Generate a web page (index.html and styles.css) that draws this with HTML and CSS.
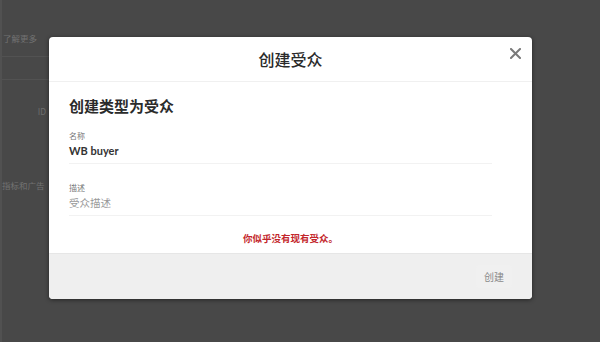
FILE: index.html
```html
<!DOCTYPE html>
<html lang="zh-CN">
<head>
<meta charset="utf-8">
<link rel="stylesheet" href="styles.css">
</head>
<body>
<div class="page">
  <div class="bg-link">了解更多</div>
  <div class="bg-row"></div>
  <div class="bg-row bg-row2"></div>
  <div class="bg-id">ID</div>
  <div class="bg-metric">指标和广告</div>
</div>
<div class="modal">
  <div class="modal-head">
    <span class="modal-title">创建受众</span>
    <span class="close">
      <svg width="11" height="11" viewBox="0 0 11 11"><path d="M1 1L10 10M10 1L1 10" stroke="#7a7a7a" stroke-width="2" stroke-linecap="square"/></svg>
    </span>
  </div>
  <div class="modal-body">
    <h2 class="heading">创建类型为受众</h2>
    <div class="field">
      <div class="label">名称</div>
      <div class="value">WB buyer</div>
    </div>
    <div class="field">
      <div class="label">描述</div>
      <div class="placeholder">受众描述</div>
    </div>
    <div class="warn">你似乎没有现有受众。</div>
  </div>
  <div class="modal-foot">
    <span class="btn">创建</span>
  </div>
</div>
</body>
</html>
```
FILE: styles.css
```css
html, body {
  margin: 0;
  padding: 0;
}
body {
  width: 600px;
  height: 342px;
  background: #484848;
  font-family: "Noto Sans CJK SC", "Noto Sans", sans-serif;
  overflow: hidden;
  position: relative;
}
.page {
  display: flex;
  flex-direction: column;
  width: 49px;
  border-left: 2px solid #515151;
  height: 342px;
  box-sizing: border-box;
}
.bg-link {
  margin-top: 32px;
  font-size: 8.5px;
  line-height: 12px;
  color: #727272;
  white-space: nowrap;
  padding-left: 1px;
}
.bg-row {
  margin-top: 12px;
  height: 1px;
  background: #525252;
}
.bg-row2 {
  margin-top: 22px;
}
.bg-id {
  margin-top: 26px;
  font-size: 8.5px;
  line-height: 10px;
  color: #6e6e6e;
  text-align: right;
  padding-right: 3px;
}
.bg-metric {
  margin-top: 64px;
  font-size: 8.5px;
  line-height: 10px;
  color: #727272;
  white-space: nowrap;
}
.modal {
  position: absolute;
  left: 49px;
  top: 37px;
  width: 483px;
  height: 262px;
  background: #fff;
  border-radius: 4px;
  box-shadow: 0 1px 4px rgba(0,0,0,0.5);
  display: flex;
  flex-direction: column;
  overflow: hidden;
}
.modal-head {
  height: 44px;
  border-bottom: 1px solid #f0f0f0;
  display: flex;
  align-items: center;
  justify-content: center;
  position: relative;
}
.modal-title {
  font-size: 16px;
  font-weight: 500;
  color: #2a2a2a;
  margin-top: -1px;
}
.close {
  position: absolute;
  right: 11px;
  top: 11px;
  width: 11px;
  height: 11px;
  display: flex;
}
.modal-body {
  flex: 1;
  padding: 13px 40px 0 20px;
  display: flex;
  flex-direction: column;
}
.heading {
  margin: 0;
  font-size: 15px;
  line-height: 22px;
  font-weight: 700;
  color: #2b2b2b;
}
.field {
  border-bottom: 1px solid #f2f2f2;
  padding-top: 14px;
  padding-bottom: 4px;
}
.field + .field {
  margin-top: 5px;
}
.label {
  font-size: 8px;
  line-height: 10px;
  color: #777;
}
.value {
  margin-top: 2px;
  font-size: 11px;
  line-height: 16px;
  font-weight: 700;
  color: #333;
  font-family: "Lato", "Noto Sans CJK SC", sans-serif;
}
.placeholder {
  margin-top: 2px;
  font-size: 10.5px;
  line-height: 16px;
  color: #999;
}
.warn {
  margin-top: 15px;
  text-align: center;
  font-size: 9.5px;
  line-height: 14px;
  font-weight: 700;
  color: #c3262b;
  padding-left: 20px;
}
.modal-foot {
  height: 45px;
  background: #efefef;
  border-top: 1px solid #e6e6e6;
  display: flex;
  align-items: center;
  justify-content: flex-end;
  padding-right: 20px;
}
.btn {
  font-size: 10px;
  color: #8a8a8a;
  padding: 4px 8px;
  border-radius: 3px;
  background: #f0f0f0;
}
```
